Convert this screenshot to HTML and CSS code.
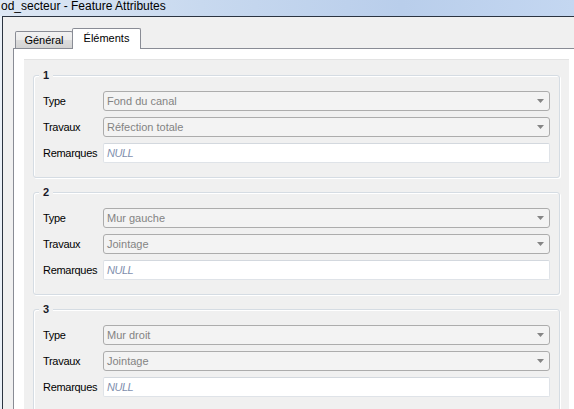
FILE: index.html
```html
<!DOCTYPE html>
<html lang="fr">
<head>
<meta charset="utf-8">
<title>od_secteur - Feature Attributes</title>
<link rel="stylesheet" href="styles.css">
</head>
<body>
<div class="window">
  <div class="titlebar">od_secteur - Feature Attributes</div>
  <div class="client">
    <div class="tabbar">
      <div class="tab">Général</div>
      <div class="tab active">Éléments</div>
    </div>
    <div class="pane">
      <div class="scroll">
        <div class="group">
          <div class="group-title">1</div>
          <div class="form">
            <span class="label">Type</span>
            <div class="combo"><span>Fond du canal</span><svg class="arrow" width="7" height="4" viewBox="0 0 7 4"><path d="M0 0H7L3.5 4Z"/></svg></div>
            <span class="label">Travaux</span>
            <div class="combo"><span>Réfection totale</span><svg class="arrow" width="7" height="4" viewBox="0 0 7 4"><path d="M0 0H7L3.5 4Z"/></svg></div>
            <span class="label">Remarques</span>
            <div class="input"><span class="null">NULL</span></div>
          </div>
        </div>
        <div class="group">
          <div class="group-title">2</div>
          <div class="form">
            <span class="label">Type</span>
            <div class="combo"><span>Mur gauche</span><svg class="arrow" width="7" height="4" viewBox="0 0 7 4"><path d="M0 0H7L3.5 4Z"/></svg></div>
            <span class="label">Travaux</span>
            <div class="combo"><span>Jointage</span><svg class="arrow" width="7" height="4" viewBox="0 0 7 4"><path d="M0 0H7L3.5 4Z"/></svg></div>
            <span class="label">Remarques</span>
            <div class="input"><span class="null">NULL</span></div>
          </div>
        </div>
        <div class="group">
          <div class="group-title">3</div>
          <div class="form">
            <span class="label">Type</span>
            <div class="combo"><span>Mur droit</span><svg class="arrow" width="7" height="4" viewBox="0 0 7 4"><path d="M0 0H7L3.5 4Z"/></svg></div>
            <span class="label">Travaux</span>
            <div class="combo"><span>Jointage</span><svg class="arrow" width="7" height="4" viewBox="0 0 7 4"><path d="M0 0H7L3.5 4Z"/></svg></div>
            <span class="label">Remarques</span>
            <div class="input"><span class="null">NULL</span></div>
          </div>
        </div>
      </div>
    </div>
  </div>
</div>
</body>
</html>
```
FILE: styles.css
```css
html, body {
  margin: 0;
  padding: 0;
}
body {
  background: #eef2f7;
  font-family: "Liberation Sans", Arial, sans-serif;
  color: #000;
}
.window {
  width: 574px;
  height: 409px;
  overflow: hidden;
  background: #eaf0f7;
}
.titlebar {
  height: 16px;
  line-height: 13px;
  font-size: 12px;
  padding-left: 1px;
  white-space: nowrap;
  background: linear-gradient(90deg, #dde7f4 0%, #c8d9ef 35%, #b9ceeb 70%, #c4d7f1 100%);
}
.client {
  margin-left: 2px;
  border-left: 1px solid #2b3441;
  border-top: 1px solid #2b3441;
  background: #f0f0f0;
  height: 400px;
  padding: 11px 0 0 10px;
}
.tabbar {
  display: flex;
  align-items: flex-end;
  height: 20px;
  border-bottom: 1px solid #898c95;
  padding-left: 2px;
  font-size: 11px;
}
.tab {
  width: 56px;
  height: 16px;
  line-height: 16px;
  text-align: center;
  border: 1px solid #898c95;
  border-bottom: none;
  border-radius: 2px 2px 0 0;
  background: linear-gradient(#f2f2f2 0%, #ebebeb 50%, #dddddd 51%, #d3d3d3 100%);
}
.tab.active {
  width: 67px;
  height: 20px;
  line-height: 19px;
  margin-left: -1px;
  margin-bottom: -1px;
  background: #fff;
}
.pane {
  border-left: 1px solid #898c95;
  background: #fff;
  padding: 10px 5px 0 10px;
  height: 380px;
}
.scroll {
  background: #f0f0f0;
  border-top: 1px solid #e3e3e3;
  padding: 15px 9px 0 9px;
  height: 400px;
}
.group {
  border: 1px solid #d5dce3;
  border-radius: 3px;
  box-shadow: 1px 1px 0 #fff, inset 1px 1px 0 #fff;
  padding: 0 9px 14px 9px;
  margin-bottom: 14px;
}
.group-title {
  width: max-content;
  height: 13px;
  line-height: 13px;
  margin: -7px 0 9px -4px;
  padding: 0 4px;
  background: #f0f0f0;
  font-size: 11px;
  font-weight: bold;
  color: #1a1a28;
}
.form {
  display: grid;
  grid-template-columns: 60px 1fr;
  grid-auto-rows: 20px;
  row-gap: 6px;
  align-items: center;
  font-size: 11px;
}
.label {
  white-space: nowrap;
  letter-spacing: -0.3px;
}
.combo {
  height: 20px;
  box-sizing: border-box;
  border: 1px solid #acacac;
  border-radius: 3px;
  background: #f3f3f3;
  display: flex;
  align-items: center;
  padding: 0 5px 0 3px;
  color: #838383;
}
.arrow {
  margin-left: auto;
  fill: #858585;
}
.input {
  height: 20px;
  box-sizing: border-box;
  border: 1px solid #dfe3e8;
  border-top-color: #d3d8de;
  border-radius: 2px;
  background: #fff;
  display: flex;
  align-items: center;
  padding-left: 3px;
}
.null {
  font-style: italic;
  color: #7f8fae;
  letter-spacing: -0.5px;
}
```
